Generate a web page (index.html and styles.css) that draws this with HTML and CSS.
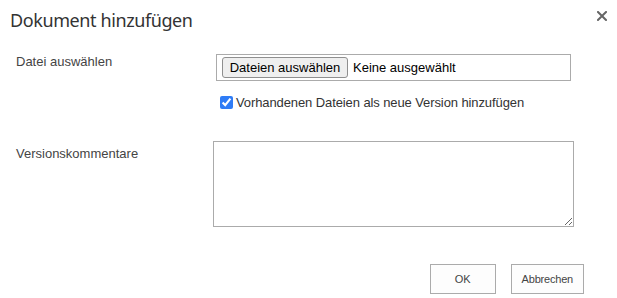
FILE: index.html
```html
<!DOCTYPE html>
<html lang="de">
<head>
<meta charset="utf-8">
<title>Dokument hinzufügen</title>
<link rel="stylesheet" href="styles.css">
</head>
<body>
<div class="dialog">
  <header class="dlg-head">
    <h1 class="dlg-title">Dokument hinzufügen</h1>
    <button class="dlg-close" type="button" aria-label="Schließen">
      <svg width="10" height="10" viewBox="0 0 10 10"><path d="M1 1 L9 9 M9 1 L1 9" stroke="#666" stroke-width="2" stroke-linecap="square" fill="none"/></svg>
    </button>
  </header>
  <div class="form">
    <div class="row row-file">
      <div class="lbl">Datei auswählen</div>
      <div class="ctl">
        <div class="file-box">
          <span class="file-btn">Dateien auswählen</span>
          <span class="file-name">Keine ausgewählt</span>
        </div>
        <label class="chk"><input type="checkbox" checked><span>Vorhandenen Dateien als neue Version hinzufügen</span></label>
      </div>
    </div>
    <div class="row row-comment">
      <div class="lbl lbl-comment">Versionskommentare</div>
      <textarea class="comment"></textarea>
    </div>
  </div>
  <div class="actions">
    <button class="btn" type="button">OK</button>
    <button class="btn" type="button">Abbrechen</button>
  </div>
</div>
</body>
</html>
```

FILE: styles.css
```css
html, body {
  margin: 0;
  padding: 0;
  background: #fff;
}
body {
  font-family: "Liberation Sans", Arial, sans-serif;
  color: #444;
}
.dialog {
  width: 617px;
  height: 298px;
  display: flex;
  flex-direction: column;
}
.dlg-head {
  display: flex;
  justify-content: space-between;
  align-items: flex-start;
  padding: 0 10px;
}
.dlg-title {
  margin: 0;
  padding-top: 8px;
  font-family: "Noto Sans", "Open Sans", sans-serif;
  font-weight: 400;
  font-size: 18px;
  letter-spacing: -0.4px;
  line-height: 25px;
  color: #333;
}
.dlg-close {
  margin-top: 11px;
  padding: 0;
  border: 0;
  background: none;
  width: 10px;
  height: 10px;
  display: flex;
}
.form {
  padding-left: 16px;
  margin-top: 21px;
}
.row {
  display: grid;
  grid-template-columns: 197px 361px;
}
.lbl {
  font-size: 13px;
  line-height: 15px;
  color: #444;
}
.ctl {
  padding-left: 3px;
}
.file-box {
  box-sizing: border-box;
  width: 355px;
  height: 27px;
  border: 1px solid #ababab;
  padding: 2px 5px;
  display: flex;
  align-items: center;
  font-size: 13px;
  color: #000;
}
.file-btn {
  box-sizing: border-box;
  height: 21px;
  width: 126px;
  display: flex;
  align-items: center;
  justify-content: center;
  background: #efefef;
  border: 1px solid #8f8f8f;
  border-radius: 3px;
}
.file-name {
  margin-left: 5px;
}
.chk {
  margin-top: 12px;
  height: 19px;
  display: flex;
  align-items: center;
  font-size: 13px;
  line-height: 15px;
  letter-spacing: -0.1px;
  color: #333;
}
.chk input {
  margin: 3px 3px 3px 4px;
  width: 13px;
  height: 13px;
  accent-color: #2f7cf6;
}
.row-comment {
  margin-top: 29px;
}
.lbl-comment {
  padding-top: 5px;
}
.comment {
  box-sizing: border-box;
  width: 361px;
  height: 86px;
  margin: 0;
  border: 1px solid #ababab;
  font-family: "Liberation Sans", Arial, sans-serif;
}
.actions {
  margin-top: 37px;
  padding-right: 33px;
  display: flex;
  justify-content: flex-end;
  gap: 15px;
}
.btn {
  box-sizing: border-box;
  min-width: 66px;
  height: 30px;
  padding: 7px 10px;
  border: 1px solid #ababab;
  background: #fdfdfd;
  font-family: "Liberation Sans", Arial, sans-serif;
  font-size: 11px;
  color: #444;
  letter-spacing: -0.2px;
}
```
